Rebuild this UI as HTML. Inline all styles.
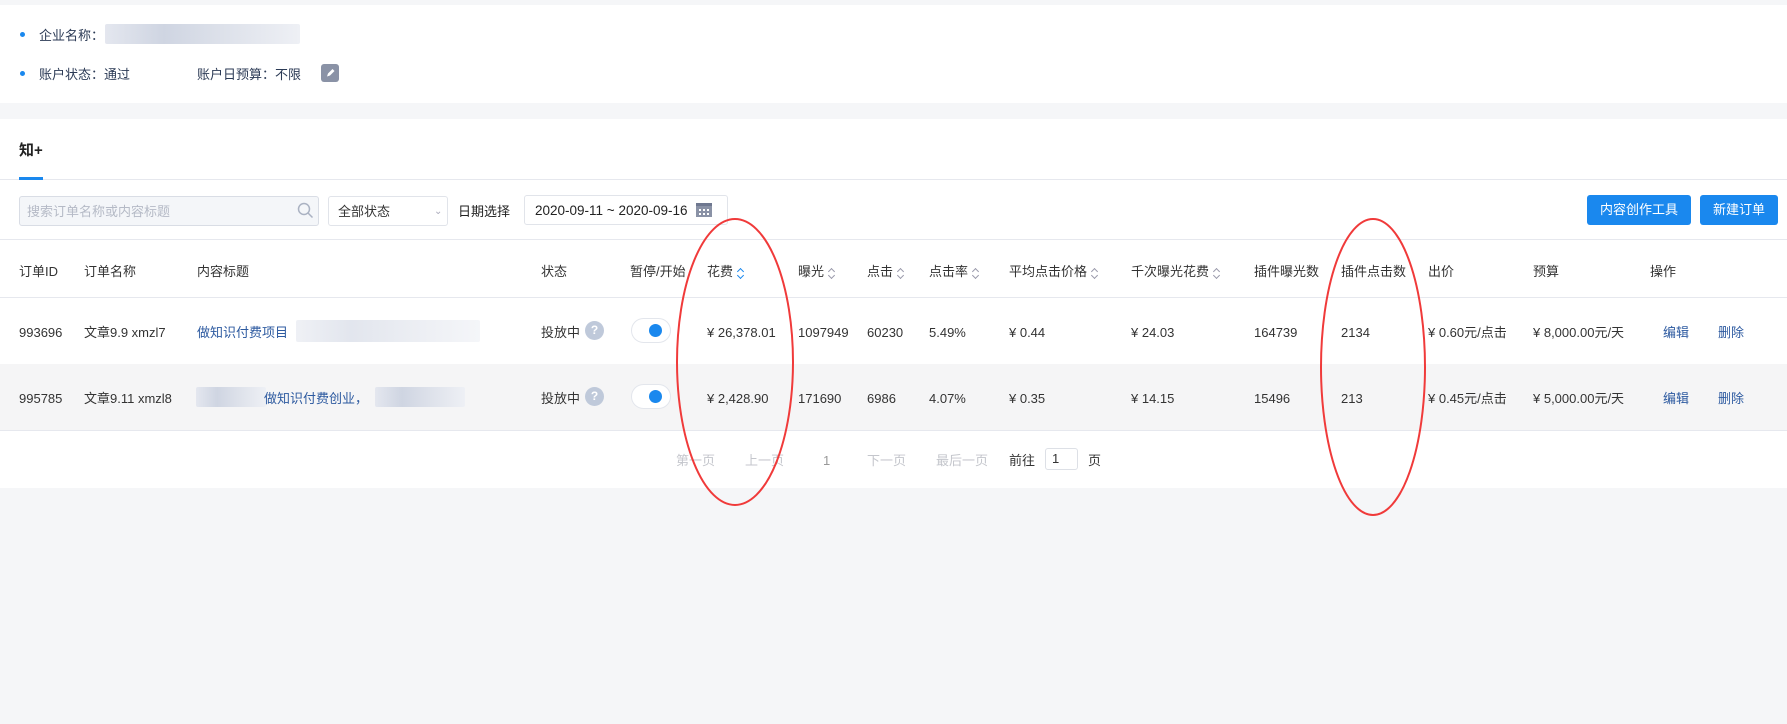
<!DOCTYPE html>
<html><head><meta charset="utf-8"><style>
*{margin:0;padding:0;box-sizing:border-box}
body{width:1787px;height:724px;background:#f5f6f8;font-family:"Liberation Sans","Noto Sans CJK SC",sans-serif;font-size:13px;color:#333;position:relative;overflow:hidden}
.a{position:absolute;white-space:nowrap;line-height:19px}
.card{position:absolute;left:0;right:0;background:#fff}
.blur{position:absolute;background:linear-gradient(90deg,#e4e7ef,#cfd5e2 30%,#dde1ea 60%,#eef0f5);border-radius:2px}
.dot{position:absolute;width:5px;height:5px;border-radius:50%;background:#1a88ee}
.hl{position:absolute;left:0;right:0;height:1px;background:#e6e8ee}
.hd{top:262px}
.r1{top:323px}
.r2{top:389px}
.link{color:#2d5aa0}
.sort{display:inline-block;vertical-align:middle;margin-left:4px;width:8px;height:12px;position:relative}
.sort:before,.sort:after{content:"";position:absolute;left:1px;width:4px;height:4px;border-left:1.5px solid #99a;border-top:1.5px solid #99a}
.sort:before{top:2px;transform:rotate(45deg)}
.sort:after{top:6px;transform:rotate(225deg)}
.sort.b:before,.sort.b:after{border-color:#1a88ee}
.q{position:absolute;width:19px;height:19px;border-radius:50%;background:#bfc9da;color:#fff;font-size:12px;font-weight:bold;text-align:center;line-height:19px}
.tg{position:absolute;width:40px;height:25px;border:1px solid #e3e6ec;border-radius:13px;background:#fff}
.tg:after{content:"";position:absolute;right:8px;top:5px;width:13px;height:13px;border-radius:50%;background:#1a88ee}
.btn{position:absolute;top:195px;height:30px;background:#1a88ee;color:#fff;border-radius:3px;text-align:center;line-height:30px;font-size:13px}
.pg{color:#c4c6cc;top:451px}
</style></head><body>
<div class="card" style="top:5px;height:98px"></div>
<div class="dot" style="left:20px;top:32px"></div>
<div class="a" style="left:39px;top:26px;color:#2b3a55">企业名称：</div>
<div class="blur" style="left:105px;top:24px;width:195px;height:20px"></div>
<div class="dot" style="left:20px;top:71px"></div>
<div class="a" style="left:39px;top:65px;color:#2b3a55">账户状态：通过</div>
<div class="a" style="left:197px;top:65px;color:#2b3a55">账户日预算：不限</div>
<div class="a" style="left:321px;top:64px;width:18px;height:18px;background:#8a92a6;border-radius:3px"><svg width="18" height="18"><path d="M6 12.5l1-3 4.5-4.5 2 2-4.5 4.5z" fill="#fff"/></svg></div>

<div class="card" style="top:119px;height:369px"></div>
<div class="a" style="left:19px;top:141px;font-size:15px;font-weight:bold;color:#222">知+</div>
<div class="hl" style="top:179px"></div>
<div class="a" style="left:19px;top:177px;width:24px;height:3px;background:#1a88ee"></div>
<div class="a" style="left:19px;top:196px;width:300px;height:30px;background:#f4f6f9;border:1px solid #d9dde5;border-radius:3px"></div>
<div class="a" style="left:27px;top:202px;color:#b5bac6">搜索订单名称或内容标题</div>
<svg class="a" style="left:297px;top:202px" width="17" height="17"><circle cx="7" cy="7" r="5.5" fill="none" stroke="#aab2c2" stroke-width="1.5"/><path d="M11 11l4.5 4.5" stroke="#aab2c2" stroke-width="1.5"/></svg>
<div class="a" style="left:328px;top:196px;width:120px;height:30px;border:1px solid #e1e4ea;border-radius:3px"></div>
<div class="a" style="left:338px;top:202px">全部状态</div>
<div class="a" style="left:434px;top:202px;color:#aab;font-size:10px">⌄</div>
<div class="a" style="left:458px;top:202px;color:#222">日期选择</div>
<div class="a" style="left:524px;top:195px;width:204px;height:30px;border:1px solid #e1e4ea;border-radius:3px"></div>
<div class="a" style="left:535px;top:201px;color:#222;font-size:13.5px">2020-09-11 ~ 2020-09-16</div>
<svg class="a" style="left:695px;top:200px" width="18" height="18"><rect x="1" y="3" width="16" height="14" fill="#8a92a6"/><rect x="1" y="3" width="16" height="3" fill="#6f7890"/><g fill="#fff"><rect x="4" y="9" width="2" height="2"/><rect x="8" y="9" width="2" height="2"/><rect x="12" y="9" width="2" height="2"/><rect x="4" y="13" width="2" height="2"/><rect x="8" y="13" width="2" height="2"/><rect x="12" y="13" width="2" height="2"/></g></svg>
<div class="btn" style="left:1587px;width:104px">内容创作工具</div>
<div class="btn" style="left:1700px;width:78px">新建订单</div>
<div class="hl" style="top:239px"></div>

<div class="a hd" style="left:19px">订单ID</div>
<div class="a hd" style="left:84px">订单名称</div>
<div class="a hd" style="left:197px">内容标题</div>
<div class="a hd" style="left:541px">状态</div>
<div class="a hd" style="left:630px">暂停/开始</div>
<div class="a hd" style="left:707px">花费<span class="sort b"></span></div>
<div class="a hd" style="left:798px">曝光<span class="sort"></span></div>
<div class="a hd" style="left:867px">点击<span class="sort"></span></div>
<div class="a hd" style="left:929px">点击率<span class="sort"></span></div>
<div class="a hd" style="left:1009px">平均点击价格<span class="sort"></span></div>
<div class="a hd" style="left:1131px">千次曝光花费<span class="sort"></span></div>
<div class="a hd" style="left:1254px">插件曝光数</div>
<div class="a hd" style="left:1341px">插件点击数</div>
<div class="a hd" style="left:1428px">出价</div>
<div class="a hd" style="left:1533px">预算</div>
<div class="a hd" style="left:1650px">操作</div>
<div class="hl" style="top:297px"></div>

<div class="a r1" style="left:19px">993696</div>
<div class="a r1" style="left:84px">文章9.9 xmzl7</div>
<div class="a r1 link" style="left:197px">做知识付费项目</div>
<div class="blur" style="left:296px;top:320px;width:184px;height:22px;opacity:.6"></div>
<div class="a r1" style="left:541px">投放中</div>
<div class="q" style="left:585px;top:321px">?</div>
<div class="tg" style="left:631px;top:318px"></div>
<div class="a r1" style="left:707px">¥ 26,378.01</div>
<div class="a r1" style="left:798px">1097949</div>
<div class="a r1" style="left:867px">60230</div>
<div class="a r1" style="left:929px">5.49%</div>
<div class="a r1" style="left:1009px">¥ 0.44</div>
<div class="a r1" style="left:1131px">¥ 24.03</div>
<div class="a r1" style="left:1254px">164739</div>
<div class="a r1" style="left:1341px">2134</div>
<div class="a r1" style="left:1428px">¥ 0.60元/点击</div>
<div class="a r1" style="left:1533px">¥ 8,000.00元/天</div>
<div class="a r1 link" style="left:1663px">编辑</div>
<div class="a r1 link" style="left:1718px">删除</div>

<div class="a" style="left:0;right:0;top:364px;height:66px;background:#f5f5f6"></div>
<div class="a r2" style="left:19px">995785</div>
<div class="a r2" style="left:84px">文章9.11 xmzl8</div>
<div class="blur" style="left:196px;top:387px;width:70px;height:20px"></div>
<div class="a r2 link" style="left:264px">做知识付费创业，</div>
<div class="blur" style="left:375px;top:387px;width:90px;height:20px"></div>
<div class="a r2" style="left:541px">投放中</div>
<div class="q" style="left:585px;top:387px">?</div>
<div class="tg" style="left:631px;top:384px"></div>
<div class="a r2" style="left:707px">¥ 2,428.90</div>
<div class="a r2" style="left:798px">171690</div>
<div class="a r2" style="left:867px">6986</div>
<div class="a r2" style="left:929px">4.07%</div>
<div class="a r2" style="left:1009px">¥ 0.35</div>
<div class="a r2" style="left:1131px">¥ 14.15</div>
<div class="a r2" style="left:1254px">15496</div>
<div class="a r2" style="left:1341px">213</div>
<div class="a r2" style="left:1428px">¥ 0.45元/点击</div>
<div class="a r2" style="left:1533px">¥ 5,000.00元/天</div>
<div class="a r2 link" style="left:1663px">编辑</div>
<div class="a r2 link" style="left:1718px">删除</div>
<div class="hl" style="top:430px"></div>

<div class="a pg" style="left:676px">第一页</div>
<div class="a pg" style="left:745px">上一页</div>
<div class="a pg" style="left:823px;color:#999">1</div>
<div class="a pg" style="left:867px">下一页</div>
<div class="a pg" style="left:936px">最后一页</div>
<div class="a pg" style="left:1009px;color:#333">前往</div>
<div class="a" style="left:1045px;top:448px;width:33px;height:22px;border:1px solid #dde0e6;border-radius:3px;padding-left:6px;line-height:20px">1</div>
<div class="a pg" style="left:1088px;color:#333">页</div>

<svg class="a" style="left:0;top:0" width="1787" height="724"><ellipse cx="735" cy="362" rx="58" ry="143" fill="none" stroke="#f03a3a" stroke-width="2"/><ellipse cx="1373" cy="367" rx="52" ry="148" fill="none" stroke="#f03a3a" stroke-width="2"/></svg>
</body></html>
